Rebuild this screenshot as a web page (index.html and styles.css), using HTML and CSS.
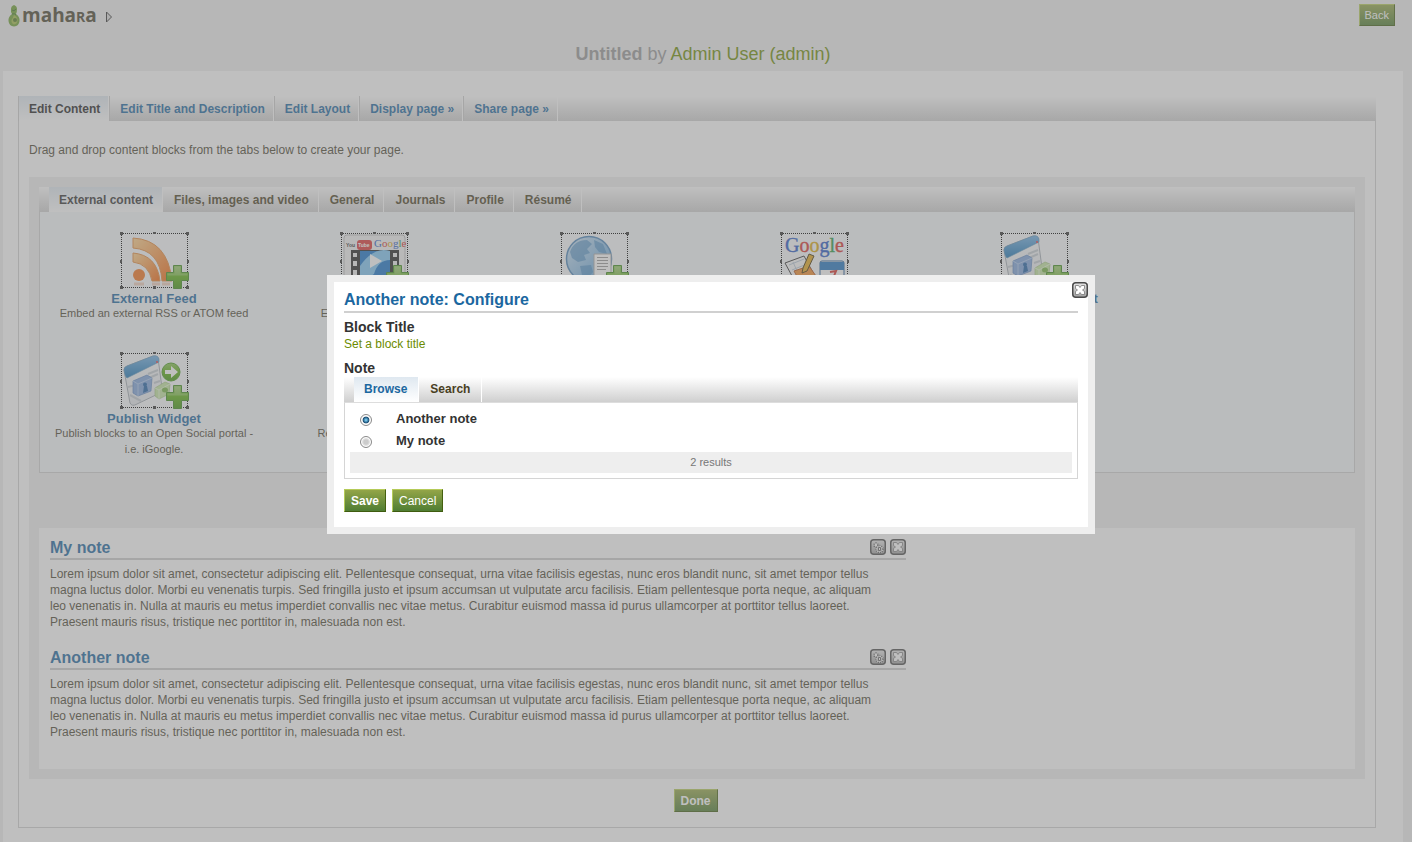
FILE: index.html
```html
<!DOCTYPE html>
<html lang="en">
<head>
<meta charset="utf-8">
<title>Untitled - Mahara</title>
<link rel="stylesheet" href="styles.css">
</head>
<body>
<svg class="defs" aria-hidden="true">
  <defs>
    <linearGradient id="orange" x1="0" y1="0" x2="1" y2="1"><stop offset="0" stop-color="#ffd28c"/><stop offset="1" stop-color="#f4640a"/></linearGradient>
    <linearGradient id="green" x1="0" y1="0" x2="0" y2="1"><stop offset="0" stop-color="#8cc456"/><stop offset=".5" stop-color="#5aae12"/><stop offset="1" stop-color="#3f9410"/></linearGradient>
    <linearGradient id="blue" x1="0" y1="0" x2="1" y2="1"><stop offset="0" stop-color="#d2e6f7"/><stop offset="1" stop-color="#4d9ad6"/></linearGradient>
    <linearGradient id="bar" x1="0" y1="0" x2="0" y2="1"><stop offset="0" stop-color="#6fb0e4"/><stop offset="1" stop-color="#1673b4"/></linearGradient>
    <linearGradient id="key" x1="0" y1="0" x2="0" y2="1"><stop offset="0" stop-color="#e6e6e6"/><stop offset="1" stop-color="#a0a0a0"/></linearGradient>
    <linearGradient id="pane" x1="0" y1="0" x2="0" y2="1"><stop offset="0" stop-color="#f7f9fb"/><stop offset="1" stop-color="#e4e8ec"/></linearGradient>
  </defs>
  <symbol id="frame" viewBox="0 0 69 57">
    <path d="M1 1h67v55H1z" fill="#fff" fill-opacity=".3"/>
    <path d="M1 1.500h67M1 55.500h67M1.500 1v55M67.500 1v55" fill="none" stroke="#000" stroke-dasharray="1 1"/>
    <path d="M0 0h3v3H0zM33 0h3v2h-3zM66 0h3v3h-3zM0 28h2v3H0zM67 28h2v3h-2zM0 54h3v3H0zM33 54h3v3h-3zM66 54h3v3h-3z" fill="#333"/>
  </symbol>
  <symbol id="plus" viewBox="0 0 69 57">
    <path d="M53.500 33.500h8v7h7v8h-7v8h-8v-8h-7v-8h7z" fill="url(#green)" stroke="#3c8d1c"/>
    <path d="M54.500 34.500h6v7h7v2h-20v-2h7z" fill="#fff" fill-opacity=".2"/>
  </symbol>
  <symbol id="widget" viewBox="0 0 69 57">
    <path d="M4 18Q4 15 7 14L33 4Q37 3 38 6L42 36Q42 39 40 41L17 52Q12 55 10 51Z" fill="url(#pane)" stroke="#a3abb3"/>
    <path d="M4 18Q4 15 7 14L33 4Q38 3 39 7V10L7 26Q5 25 4 18Z" fill="url(#bar)" stroke="#4d8dbb" stroke-width=".6"/>
    <circle cx="37" cy="10" r="1" fill="#e33"/>
    <path d="M28 22l10-4M29 26l9-4M34 31l6-2M8 35l8-2M10 43l11 6" stroke="#c3cad1" stroke-width="2"/>
    <path d="M13 29L27 23L32 26L31 39L18 44L13 41Z" fill="#7fa5db" stroke="#5380bd" stroke-width=".7"/>
    <path d="M13 29L18 32V44M18 32L32 26" fill="none" stroke="#a9c5eb"/>
    <circle cx="25" cy="32.500" r="2" fill="#1e60a4"/><path d="M24 34h3l1 5-5 2z" fill="#1e60a4"/>
    <path d="M35 36L45 30L50 32L49 42L39 47L35 44Z" fill="#c3e4a0" stroke="#a1c47d" stroke-width=".7"/>
    <path d="M35 36L39 38V47M39 38L50 32" fill="none" stroke="#e3f5d2"/>
    <ellipse cx="45" cy="38" rx="3" ry="2.500" fill="#74b242"/>
  </symbol>
  <symbol id="close-key" viewBox="0 0 16 16">
    <rect x=".75" y=".75" width="14.500" height="14.500" rx="3" fill="url(#key)" stroke="#4a4a4a" stroke-width="1.500"/>
    <path d="M3.500 3.500h3L8 5.500l1.500-2h3v3L10.500 8l2 1.500v3h-3L8 10.500l-1.500 2h-3v-3L5.500 8l-2-1.500z" fill="#fff" stroke="#777" stroke-width=".8"/>
  </symbol>
  <symbol id="gear-key" viewBox="0 0 16 16">
    <rect x=".75" y=".75" width="14.500" height="14.500" rx="3" fill="url(#key)" stroke="#4a4a4a" stroke-width="1.500"/>
    <circle cx="6" cy="6" r="2" fill="#fff" stroke="#555" stroke-width="1.500" stroke-dasharray="1 1"/>
    <circle cx="9.500" cy="10" r="3" fill="none" stroke="#fff" stroke-width="1.500"/>
    <circle cx="9.500" cy="10" r="3.500" fill="none" stroke="#555" stroke-width="1.500" stroke-dasharray="1 1"/>
    <path d="M8.500 8.500h2v3h-2z" fill="#fff" stroke="#666"/>
  </symbol>
</svg>

<header class="top">
  <a class="logo" href="#" aria-label="Mahara">
    <svg width="12" height="22" viewBox="0 0 12 22" aria-hidden="true">
      <path d="M6 0Q9 1 9 4Q9 7 8 9Q12 12 11.500 16Q11 21 6 21.500Q1 21 .5 16Q0 12 4 9Q2.500 7 3 4Q3 1 6 0Z" fill="#6fa233"/>
      <path d="M6 10Q10 12 9.500 16Q9 19 6 19.500Q3 18 3.500 15Q5 13 6 10Z" fill="#a4bd49"/>
      <circle cx="7" cy="15" r="2" fill="#527b25"/><path d="M4 5Q6 7 8 4M4 9Q7 8 8 10" stroke="#3f7526" fill="none"/>
    </svg>
    <span class="wordmark">maha<span class="small-cap">R</span>a</span>
  </a>
  <svg class="arrow" width="8" height="12" viewBox="0 0 8 12" aria-hidden="true"><path d="M1.500 1L6.500 6L1.500 11Z" fill="#ddd" stroke="#333"/></svg>
  <button class="btn btn-small" type="button">Back</button>
</header>
<h1 class="page-title"><strong>Untitled</strong> by <a href="#">Admin User (admin)</a></h1>

<main class="main">
  <nav class="tabs page-tabs">
    <a class="tab current" href="#">Edit Content</a>
    <a class="tab" href="#">Edit Title and Description</a>
    <a class="tab" href="#">Edit Layout</a>
    <a class="tab" href="#">Display page »</a>
    <a class="tab" href="#">Share page »</a>
  </nav>
  <div class="content">
    <p class="hint">Drag and drop content blocks from the tabs below to create your page.</p>
    <div class="editor">
      <nav class="tabs block-tabs">
        <a class="tab current" href="#">External content</a>
        <a class="tab" href="#">Files, images and video</a>
        <a class="tab" href="#">General</a>
        <a class="tab" href="#">Journals</a>
        <a class="tab" href="#">Profile</a>
        <a class="tab" href="#">Résumé</a>
      </nav>
      <ul class="palette">
        <li class="item">
          <svg class="thumb" viewBox="0 0 69 57" aria-hidden="true">
            <use href="#frame"/>
            <path d="M13 6Q48 8 52 49H42Q40 18 13 16Z" fill="url(#orange)" stroke="#e58b3c"/>
            <path d="M13 21Q37 23 40 49H32Q29 32 13 30Z" fill="url(#orange)" stroke="#e58b3c"/>
            <circle cx="19" cy="43" r="6" fill="#f4731c"/>
            <path d="M14 52h10M32 52h8M42 52h8" stroke="#e58b5c" stroke-opacity=".4" stroke-width="3"/>
            <use href="#plus"/>
          </svg>
          <h3>External Feed</h3>
          <p>Embed an external RSS or ATOM feed</p>
        </li>
        <li class="item untitled">
          <svg class="thumb" viewBox="0 0 69 57" aria-hidden="true">
            <use href="#frame"/>
            <rect x="4" y="3" width="61" height="51" rx="3" fill="#f2f2f2" stroke="#bbb"/>
            <rect x="11" y="18" width="48" height="36" fill="#222"/>
            <rect x="20" y="19" width="30" height="34" fill="#1673c8"/>
            <path d="M20 34Q34 14 50 19V28Q38 28 34 42Q26 48 20 44Z" fill="#7fc6f5"/>
            <path d="M13 21h4v4h-4zM13 29h4v5h-4zM13 38h4v5h-4zM53 21h4v4h-4zM53 29h4v5h-4z" fill="#eee"/>
            <path d="M30 22L42 29L30 36Z" fill="#fff"/>
            <rect x="17" y="8" width="15" height="10" rx="3" fill="#dc3434"/>
            <text class="yt" x="6" y="15" fill="#333">You</text>
            <text class="yt" x="18" y="15" fill="#fff">Tube</text>
            <text class="gsmall" x="34" y="15" fill="#2456c4">G<tspan fill="#d8302a">o</tspan><tspan fill="#dba70b">o</tspan><tspan fill="#2456c4">g</tspan><tspan fill="#299a40">l</tspan><tspan fill="#d8302a">e</tspan></text>
            <use href="#plus"/>
          </svg>
          <p>Embed external video</p>
        </li>
        <li class="item">
          <svg class="thumb" viewBox="0 0 69 57" aria-hidden="true">
            <use href="#frame"/>
            <circle cx="29" cy="27" r="22.500" fill="url(#blue)" stroke="#4b86bb" stroke-width="1.500"/>
            <path d="M10 20Q14 8 27 8L32 12L27 17L30 21L24 23L26 28L18 30L12 26ZM34 8L43 12L47 22L39 20L35 15ZM20 34L31 33L33 40L27 47L22 43Z" fill="#3c82bd" fill-opacity=".6"/>
            <path d="M34 22h17v24H34z" fill="#fff" stroke="#aaa"/>
            <path d="M37 25.500h11M37 28.500h11M37 31.500h11M37 34.500h11M37 37.500h9" stroke="#999"/>
            <use href="#plus"/>
          </svg>
        </li>
        <li class="item">
          <svg class="thumb" viewBox="0 0 69 57" aria-hidden="true">
            <use href="#frame"/>
            <text class="gbig" x="5" y="20" fill="#2456c4">G<tspan class="g-red">o</tspan><tspan class="g-yellow">o</tspan>g<tspan class="g-green">l</tspan><tspan class="g-red">e</tspan></text>
            <path d="M5 31L24 24L37 48L18 55Z" fill="#fafafa" stroke="#333"/>
            <path d="M9 33l15-6M12 38l15-6M13 30l8 18" stroke="#b9c9d8"/>
            <path d="M14 39L29 34L36 44L20 50Z" fill="#f38c2b" stroke="#b5541b"/>
            <path d="M29 22L34 24L27 39L22 41L23 36Z" fill="#e4a91e" stroke="#463408"/>
            <rect x="40" y="29" width="24" height="24" rx="2" fill="#fff" stroke="#1d5693"/>
            <path d="M40 30h24v8H40z" fill="#2075c1"/>
            <path d="M50 40l6-1-2 5" fill="none" stroke="#d8302a" stroke-width="2"/>
          </svg>
        </li>
        <li class="item">
          <svg class="thumb" viewBox="0 0 69 57" aria-hidden="true"><use href="#frame"/><use href="#widget"/><use href="#plus"/></svg>
          <h3>Open Social Content</h3>
        </li>
        <li class="item">
          <svg class="thumb" viewBox="0 0 69 57" aria-hidden="true">
            <use href="#frame"/><use href="#widget"/>
            <circle cx="51" cy="20" r="9" fill="url(#green)" stroke="#459b19"/>
            <path d="M45 18h6v-4l7 6-7 6v-4h-6z" fill="#fff"/>
            <use href="#plus"/>
          </svg>
          <h3>Publish Widget</h3>
          <p>Publish blocks to an Open Social portal - i.e. iGoogle.</p>
        </li>
        <li class="item untitled">
          <svg class="thumb" viewBox="0 0 69 57" aria-hidden="true"><use href="#frame"/><use href="#plus"/></svg>
          <p>Recent external entries</p>
        </li>
      </ul>
      <div class="layout">
        <section class="block">
          <header class="block-head">
            <h2>My note</h2>
            <button class="key" type="button" aria-label="Configure My note"><svg viewBox="0 0 16 16"><use href="#gear-key"/></svg></button>
            <button class="key" type="button" aria-label="Remove My note"><svg viewBox="0 0 16 16"><use href="#close-key"/></svg></button>
          </header>
          <p>Lorem ipsum dolor sit amet, consectetur adipiscing elit. Pellentesque consequat, urna vitae facilisis egestas, nunc eros blandit nunc, sit amet tempor tellus magna luctus dolor. Morbi eu venenatis turpis. Sed fringilla justo et ipsum accumsan ut vulputate arcu facilisis. Etiam pellentesque porta neque, ac aliquam leo venenatis in. Nulla at mauris eu metus imperdiet convallis nec vitae metus. Curabitur euismod massa id purus ullamcorper at porttitor tellus laoreet. Praesent mauris risus, tristique nec porttitor in, malesuada non est.</p>
        </section>
        <section class="block">
          <header class="block-head">
            <h2>Another note</h2>
            <button class="key" type="button" aria-label="Configure Another note"><svg viewBox="0 0 16 16"><use href="#gear-key"/></svg></button>
            <button class="key" type="button" aria-label="Remove Another note"><svg viewBox="0 0 16 16"><use href="#close-key"/></svg></button>
          </header>
          <p>Lorem ipsum dolor sit amet, consectetur adipiscing elit. Pellentesque consequat, urna vitae facilisis egestas, nunc eros blandit nunc, sit amet tempor tellus magna luctus dolor. Morbi eu venenatis turpis. Sed fringilla justo et ipsum accumsan ut vulputate arcu facilisis. Etiam pellentesque porta neque, ac aliquam leo venenatis in. Nulla at mauris eu metus imperdiet convallis nec vitae metus. Curabitur euismod massa id purus ullamcorper at porttitor tellus laoreet. Praesent mauris risus, tristique nec porttitor in, malesuada non est.</p>
        </section>
      </div>
    </div>
    <div class="finish"><button class="btn btn-bold" type="button">Done</button></div>
  </div>
</main>

<div class="overlay"></div>
<form class="dialog" role="dialog" aria-labelledby="dialog-title">
  <button class="key dialog-close" type="button" aria-label="Close"><svg viewBox="0 0 16 16"><use href="#close-key"/></svg></button>
  <h2 class="dialog-title" id="dialog-title">Another note: Configure</h2>
  <h3 class="field-label">Block Title</h3>
  <a class="field-link" href="#">Set a block title</a>
  <h3 class="field-label note-label">Note</h3>
  <nav class="tabs block-tabs">
    <a class="tab current" href="#">Browse</a>
    <a class="tab" href="#">Search</a>
  </nav>
  <div class="results">
    <label class="choice"><input type="radio" name="note" checked><span>Another note</span></label>
    <label class="choice"><input type="radio" name="note"><span>My note</span></label>
    <div class="count">2 results</div>
  </div>
  <div class="actions">
    <button class="btn btn-bold" type="button">Save</button>
    <button class="btn" type="button">Cancel</button>
  </div>
</form>
</body>
</html>
```

FILE: styles.css
```css
* { box-sizing: border-box; }

html, body { height: 100%; }

body {
  margin: 0;
  display: flex;
  flex-direction: column;
  overflow: hidden;
  background: #eee;
  color: #49442f;
  font: 12px/16px "Liberation Sans", Arial, sans-serif;
}

h1, h2, h3, p, ul { margin: 0; padding: 0; }
a { text-decoration: none; }
.defs { position: absolute; width: 0; height: 0; }

.top {
  display: flex;
  align-items: center;
  height: 30px;
  padding: 0 17px 0 8px;
}
.logo { display: flex; align-items: center; gap: 2px; padding-top: 2px; color: #49442f; }
.wordmark { font: bold 19px/22px "Open Sans", sans-serif; }
.small-cap { font-size: 14px; }
.arrow { margin: 3px 0 0 8px; }
.top .btn { margin-left: auto; }

.page-title {
  margin-right: 6px;
  padding: 13px 0 6px;
  text-align: center;
  color: #999;
  font-size: 18px;
  font-weight: normal;
  line-height: 22px;
}
.page-title a { color: #6c8c00; }

.main {
  flex: 1 0 auto;
  margin: 0 9px 0 3px;
  padding: 25px 27px 14px 15px;
  background: #fff;
}

.tabs {
  display: flex;
  height: 25px;
  background: linear-gradient(#fff, #cfcfcf);
  font-weight: bold;
  line-height: 25px;
}
.main .tab { height: 25px; line-height: 27px; }
.tab.current { background: linear-gradient(#dfe8f0, #fff); }

.page-tabs .tab {
  padding: 0 8px 0 10px;
  border-left: 1px solid #ccc;
  border-right: 1px solid #fff;
  color: #1b67a0;
}
.page-tabs .tab.current { color: #222; }

.block-tabs { padding-left: 10px; gap: 1px; }
.block-tabs .tab {
  padding: 0 9px 0 10px;
  border-right: 1px solid #fff;
  color: #49401f;
}
.block-tabs .tab.current { color: #333; }
.dialog .tab { padding: 0 11px 0 10px; }
.dialog .tab.current { color: #1b67a0; }

.content {
  padding: 21px 10px 15px;
  border: 1px solid #d0d0d0;
  border-top: 0;
}
.hint { margin-bottom: 19px; }
.editor { padding: 10px; background: #eee; }

.palette {
  display: flex;
  flex-wrap: wrap;
  padding: 20px 4px 0;
  border: 1px solid #d0d0d0;
  border-top: 0;
  background: #f5f8fb;
  list-style: none;
}
.item {
  width: 220px;
  height: 120px;
  padding: 0 10px;
  text-align: center;
  font-size: 11px;
}
.thumb { display: block; width: 69px; height: 57px; margin: 0 auto; }
.item h3 { height: 16px; color: #1b67a0; font-size: 13px; line-height: 19px; }
.untitled .thumb { margin-bottom: 16px; }
.yt { font: bold 5px "Liberation Sans", sans-serif; }
.gsmall { font: 11px "Liberation Serif", serif; }
.gbig { font: 20px "Liberation Serif", serif; stroke: #2456c4; stroke-width: .4px; }
.g-red { fill: #d8302a; stroke: #d8302a; }
.g-yellow { fill: #dba70b; stroke: #dba70b; }
.g-green { fill: #299a40; stroke: #299a40; }

.layout { margin-top: 55px; padding: 9px 8px 12px 11px; background: #fff; }
.block { width: 66%; margin-bottom: 17px; }
.block p { padding-right: 20px; }
.block-head {
  display: flex;
  align-items: flex-start;
  gap: 4px;
  height: 23px;
  margin-bottom: 6px;
  border-bottom: 2px solid #ccc;
}
.block-head h2 { margin-right: auto; color: #1b67a0; font-size: 16px; line-height: 21px; }
.block-head .key { margin-top: 2px; }

.key { display: block; width: 16px; height: 16px; padding: 0; border: 0; background: none; }
.key svg { display: block; width: 16px; height: 16px; }

.finish { display: flex; justify-content: center; padding: 10px 3px 0 0; }

.btn {
  height: 23px;
  padding: 0 6px;
  border: 1px solid;
  border-color: #b5cb58 #456010 #3f5c10 #b5cb58;
  background: linear-gradient(#93a548, #4f7d33);
  color: #fff;
  font: 12px/16px "Liberation Sans", Arial, sans-serif;
}
.btn-small { height: 22px; padding: 0 5px; font-size: 11px; }
.btn-bold { font-weight: bold; }

.overlay { position: fixed; inset: 0; background: rgba(128, 128, 128, .5); }

.dialog {
  position: absolute;
  top: 275px;
  left: calc(50% - 379px);
  width: 768px;
  padding: 7px 10px 15px;
  border: 7px solid #eee;
  background: #fff;
}
.dialog-close { position: absolute; top: 0; right: 0; }
.dialog-title {
  height: 24px;
  border-bottom: 2px solid #d0d0d0;
  color: #1b67a0;
  font-size: 16px;
  line-height: 22px;
}
.field-label { margin-top: 6px; color: #333; font-size: 14px; line-height: 16px; }
.field-link { display: block; color: #6c8c00; line-height: 18px; }
.note-label { margin: 7px 0 1px; }

.results { padding: 5px; border: 1px solid #d5d5d5; border-top-color: #ddd; }
.choice { display: flex; align-items: center; height: 22px; color: #333; font-size: 13px; font-weight: bold; }
.choice input {
  appearance: none;
  width: 12px;
  height: 12px;
  margin: 2px 24px 0 10px;
  border: 1px solid #8a8a8a;
  border-radius: 50%;
  background: radial-gradient(circle, #ccc 30%, #eee 60%);
  box-shadow: inset 0 0 0 1px #fff;
}
.choice input:checked { background: radial-gradient(circle at 50% 50%, #7ccdf0 6%, #12466f 44%, #eee 52%); }
.count { height: 21px; background: #eee; color: #777; font-size: 11px; line-height: 21px; text-align: center; }

.actions { display: flex; gap: 6px; margin-top: 10px; }
```
